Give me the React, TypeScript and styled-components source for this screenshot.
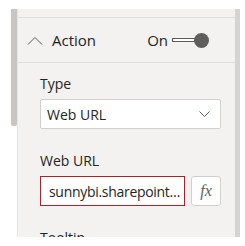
import React from "react";
import styled, { createGlobalStyle } from "styled-components";

const GlobalStyle = createGlobalStyle`
  html, body { margin: 0; padding: 0; background: #ffffff; }
  body { font-family: "Segoe UI", "Open Sans", "Noto Sans", sans-serif; color: #252423; }
  * { box-sizing: border-box; }
`;

const Frame = styled.div`
  display: flex;
  height: 246px;
  width: 245px;
  padding: 9px 5px 9px 11px;
`;

const ScrollTrack = styled.div`
  width: 6px;
  flex: none;
`;

const ScrollThumb = styled.div`
  width: 6px;
  height: 117px;
  background: #c8c6c4;
  border-radius: 0 0 2px 2px;
`;

const Panel = styled.div`
  flex: 1;
  display: flex;
  flex-direction: column;
  background: #f3f2f1;
  border-left: 1px solid #e6e4e2;
  border-right: 5px solid #d6d4d2;
  overflow: hidden;
  padding-top: 8px;
`;

const Header = styled.div`
  flex: none;
  display: flex;
  align-items: center;
  height: 46px;
  border-top: 1px solid #e1dfdd;
  border-bottom: 1px solid #e1dfdd;
  padding: 0 0 0 9px;
`;

const Chevron = styled.svg`
  width: 16px;
  height: 9px;
  flex: none;
`;

const Title = styled.span`
  font-size: 15px;
  margin-left: 9px;
  flex: 1;
`;

const ToggleLabel = styled.span`
  font-size: 15px;
  margin-right: 4px;
`;

const Toggle = styled.div`
  display: flex;
  align-items: center;
  margin-right: 26px;
`;

const Track = styled.div`
  width: 24px;
  height: 4px;
  border: 1px solid #605e5c;
  background: #ffffff;
`;

const Thumb = styled.div`
  width: 15px;
  height: 15px;
  border-radius: 50%;
  background: #605e5c;
  margin-left: -2px;
`;

const Body = styled.div`
  flex: none;
  display: flex;
  flex-direction: column;
  padding: 11px 14px 0 22px;
`;

const Label = styled.div`
  font-size: 14px;
  line-height: 20px;
  margin-bottom: 5px;
`;

const Field = styled.div`
  display: flex;
  gap: 6px;
  margin-bottom: 22px;
`;

const Select = styled.div`
  flex: 1;
  height: 30px;
  display: flex;
  align-items: center;
  justify-content: space-between;
  background: #ffffff;
  border: 1px solid #d2d0ce;
  border-radius: 2px;
  padding: 0 10px 0 6px;
  font-size: 14px;
`;

const Input = styled.div`
  flex: 1;
  min-width: 0;
  height: 30px;
  display: flex;
  align-items: center;
  background: #ffffff;
  border: 1px solid #a4262c;
  padding: 0 1px 0 8px;
  font-size: 14px;
  letter-spacing: -0.3px;
`;

const InputText = styled.span`
  overflow: hidden;
  white-space: nowrap;
  text-overflow: ellipsis;
`;

const FxButton = styled.div`
  width: 30px;
  height: 30px;
  flex: none;
  display: flex;
  align-items: center;
  justify-content: center;
  background: #ffffff;
  border: 1px solid #d2d0ce;
  border-radius: 3px;
  font-family: "Liberation Serif", "DejaVu Serif", serif;
  font-style: italic;
  font-size: 16px;
  color: #605e5c;
`;

export default function App() {
  return (
    <>
      <GlobalStyle />
      <Frame>
        <ScrollTrack>
          <ScrollThumb />
        </ScrollTrack>
        <Panel>
          <Header>
            <Chevron viewBox="0 0 16 9">
              <path d="M1 8.5 L8 1.5 L15 8.5" fill="none" stroke="#605e5c" strokeWidth="1" />
            </Chevron>
            <Title>Action</Title>
            <ToggleLabel>On</ToggleLabel>
            <Toggle>
              <Track />
              <Thumb />
            </Toggle>
          </Header>
          <Body>
            <Label>Type</Label>
            <Field>
              <Select>
                <span>Web URL</span>
                <svg width="11" height="6" viewBox="0 0 11 6">
                  <path d="M0.5 0.5 L5.5 5.5 L10.5 0.5" fill="none" stroke="#605e5c" strokeWidth="1" />
                </svg>
              </Select>
            </Field>
            <Label>Web URL</Label>
            <Field>
              <Input>
                <InputText>sunnybi.sharepoint.com/sites/reports</InputText>
              </Input>
              <FxButton>fx</FxButton>
            </Field>
            <Label>Tooltip</Label>
          </Body>
        </Panel>
      </Frame>
    </>
  );
}
